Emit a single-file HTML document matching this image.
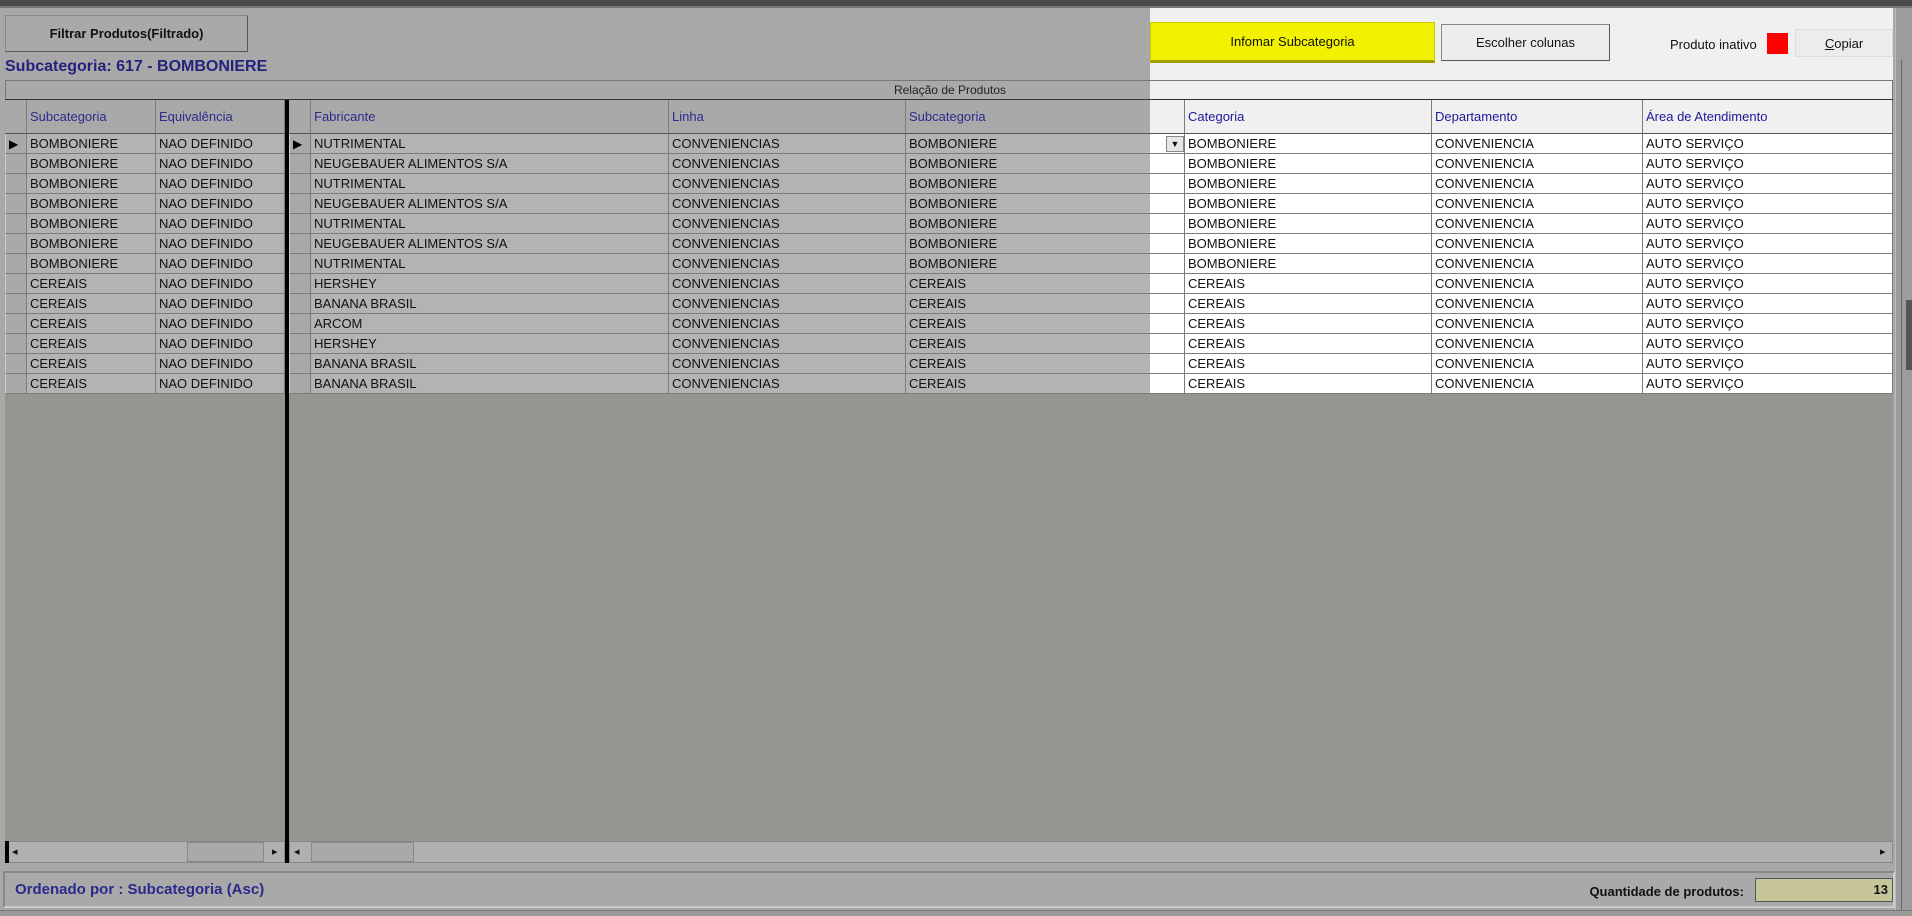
<!DOCTYPE html>
<html><head><meta charset="utf-8"><style>
*{margin:0;padding:0;box-sizing:border-box}
body{width:1912px;height:916px;overflow:hidden;background:#a8a8a8;font-family:"Liberation Sans",sans-serif;font-size:13px;color:#111;position:relative}
.a{position:absolute}
.c{position:absolute;height:20px;border-right:1px solid #7c7c7c;border-bottom:1px solid #7c7c7c;padding-left:3px;line-height:19px;white-space:nowrap;overflow:hidden;background:#b3b3b3}
.h{position:absolute;height:34px;top:100px;border-right:1px solid #7c7c7c;border-bottom:1px solid #555;padding-left:3px;line-height:34px;color:#2b2b8c;background:#a9a9a9}
.w{background:#fff}
.hw{background:#f0f0f0;color:#1a1a9a}
.btn{position:absolute;border:1px solid #888;border-right-color:#555;border-bottom-color:#555;text-align:center}
</style></head><body>
<div class="a" style="left:0;top:0;width:1912px;height:8px;background:#4a4a4a;border-bottom:2px solid #777"></div>
<div class="a" style="left:1150px;top:8px;width:743px;height:72px;background:#f0f0f0"></div>
<div class="a" style="left:1895px;top:8px;width:17px;height:908px;background:#9c9c9c;border-left:1px solid #bbb"></div>
<div class="a" style="left:1901px;top:60px;width:1px;height:856px;background:#666"></div>
<div class="a" style="left:1906px;top:300px;width:6px;height:70px;background:#555"></div>

<div class="btn" style="left:5px;top:15px;width:243px;height:37px;background:#a9a9a9;font-weight:bold;line-height:35px;font-size:13px">Filtrar Produtos(Filtrado)</div>
<div class="a" style="left:5px;top:58px;font-weight:bold;font-size:16px;color:#23237e">Subcategoria: 617 - BOMBONIERE</div>

<div class="btn" style="left:1150px;top:22px;width:285px;height:41px;background:#f2f200;border-color:#c8c800;border-bottom:3px solid #a0a000;line-height:38px">Infomar Subcategoria</div>
<div class="btn" style="left:1441px;top:24px;width:169px;height:37px;background:#ededed;line-height:35px">Escolher colunas</div>
<div class="a" style="left:1670px;top:37px">Produto inativo</div>
<div class="a" style="left:1767px;top:33px;width:21px;height:21px;background:#f00"></div>
<div class="btn" style="left:1795px;top:29px;width:98px;height:28px;background:#ececec;border-color:#ddd;line-height:27px"><u>C</u>opiar</div>

<div class="a" style="left:5px;top:80px;width:1888px;height:20px;border:1px solid #777;background:#a9a9a9"></div>
<div class="a" style="left:1150px;top:81px;width:742px;height:18px;background:#f0f0f0"></div>
<div class="a" style="left:0;top:83px;width:1900px;text-align:center;font-size:12px;color:#222">Relação de Produtos</div>
<div class="a" style="left:5px;top:99px;width:1888px;height:2px;background:#333"></div>
<div class="a" style="left:5px;top:394px;width:1888px;height:447px;background:#979590"></div>

<div id="g"></div>
<div class="a" style="left:285px;top:100px;width:4px;height:763px;background:#000"></div>

<div class="a" style="left:5px;top:841px;width:280px;height:22px;background:#b0b0b0;border:1px solid #888"></div>
<div class="a" style="left:5px;top:841px;width:4px;height:22px;background:#000"></div>
<div class="a" style="left:187px;top:842px;width:77px;height:20px;background:#a9a9a9;border:1px solid #888"></div>
<div class="a" style="left:12px;top:845px;font-size:11px">◂</div>
<div class="a" style="left:272px;top:845px;font-size:11px">▸</div>
<div class="a" style="left:289px;top:841px;width:1604px;height:22px;background:#b0b0b0;border:1px solid #888"></div>
<div class="a" style="left:311px;top:842px;width:103px;height:20px;background:#a9a9a9;border:1px solid #888"></div>
<div class="a" style="left:294px;top:845px;font-size:11px">◂</div>
<div class="a" style="left:1880px;top:845px;font-size:11px">▸</div>

<div class="a" style="left:3px;top:871px;width:1892px;height:37px;border:2px solid #888;border-right-color:#ccc;border-bottom-color:#ccc;background:#a9a9a9"></div>
<div class="a" style="left:15px;top:881px;font-weight:bold;font-size:15px;color:#2a2a8c">Ordenado por : Subcategoria (Asc)</div>
<div class="a" style="left:1570px;top:884px;font-weight:bold;font-size:13px;width:174px;text-align:right">Quantidade de produtos:</div>
<div class="a" style="left:1755px;top:878px;width:138px;height:24px;background:#c7c69a;border:1px solid #555;text-align:right;padding-right:4px;line-height:22px;font-weight:bold">13</div>
<div class="a" style="left:0;top:910px;width:1912px;height:6px;background:#9a9a9a;border-top:1px solid #777"></div>

<script>
var cols=[[5,27],[27,156],[156,285],[289,311],[311,669],[669,906],[906,1185],[1185,1432],[1432,1643],[1643,1893]];
var hd=["","Subcategoria","Equivalência","","Fabricante","Linha","Subcategoria","Categoria","Departamento","Área de Atendimento"];
var rows=[["BOMBONIERE","NUTRIMENTAL"],["BOMBONIERE","NEUGEBAUER ALIMENTOS S/A"],["BOMBONIERE","NUTRIMENTAL"],["BOMBONIERE","NEUGEBAUER ALIMENTOS S/A"],["BOMBONIERE","NUTRIMENTAL"],["BOMBONIERE","NEUGEBAUER ALIMENTOS S/A"],["BOMBONIERE","NUTRIMENTAL"],["CEREAIS","HERSHEY"],["CEREAIS","BANANA BRASIL"],["CEREAIS","ARCOM"],["CEREAIS","HERSHEY"],["CEREAIS","BANANA BRASIL"],["CEREAIS","BANANA BRASIL"]];
var s="";
for(var i=0;i<cols.length;i++){var x=cols[i][0],w=cols[i][1]-x,b=i>=7;
 s+='<div class="h'+(b?' hw':'')+'" style="left:'+x+'px;width:'+w+'px">'+hd[i]+'</div>';}
s+='<div class="h hw" style="left:1150px;width:35px;border-right:1px solid #7c7c7c"></div>';
for(var r=0;r<13;r++){var y=134+r*20,d=rows[r];
 var v=["",d[0],"NAO DEFINIDO","",d[1],"CONVENIENCIAS",d[0],d[0],"CONVENIENCIA","AUTO SERVIÇO"];
 for(var i=0;i<cols.length;i++){var x=cols[i][0],w=cols[i][1]-x,b=i>=7;
  var t=v[i]; if((i==0||i==3)&&r==0)t='<span style="font-size:12px;color:#000">&#9654;</span>';
  var bg=(i==0||i==3)?'background:#a9a9a9;border-left:1px solid #ccc;':'';
  s+='<div class="c'+(b?' w':'')+'" style="'+bg+'left:'+x+'px;top:'+y+'px;width:'+w+'px">'+t+'</div>';}
 s+='<div class="c w" style="left:1150px;top:'+y+'px;width:35px;padding:0"></div>';
}
s+='<div class="a" style="left:1166px;top:136px;width:18px;height:16px;background:#e6e6e6;border:1px solid #888;font-size:9px;text-align:center;line-height:15px">&#9660;</div>';
document.getElementById("g").innerHTML=s;
</script>
</body></html>
